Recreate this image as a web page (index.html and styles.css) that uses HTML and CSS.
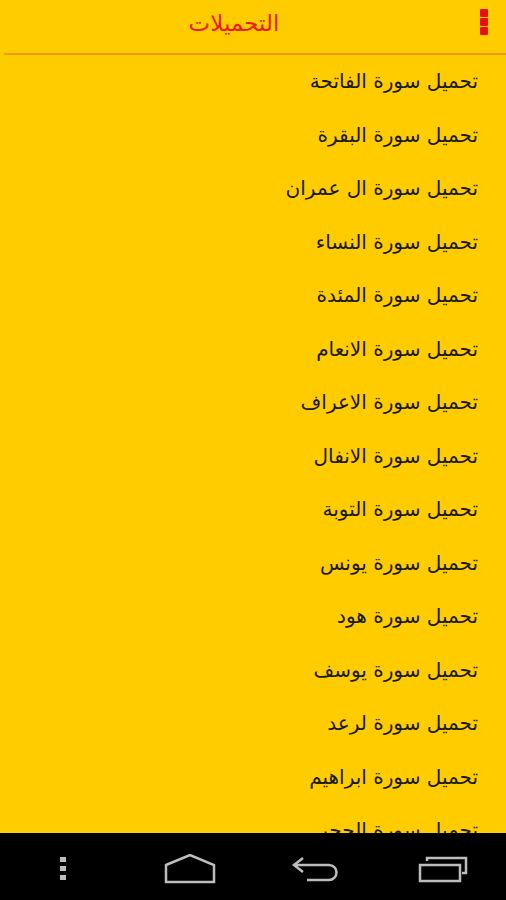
FILE: index.html
```html
<!DOCTYPE html>
<html lang="ar" dir="rtl">
<head>
  <meta charset="UTF-8" />
  <meta name="viewport" content="width=device-width, initial-scale=1" />
  <title>التحميلات</title>
  <link rel="stylesheet" href="styles.css">
</head>
<body>
  <div class="screen">
    <div class="action-bar">
      <div class="overflow-btn">
        <span></span><span></span><span></span>
      </div>
      <div class="title">التحميلات</div>
    </div>

    <ul class="sura-list">
      <li>تحميل سورة الفاتحة</li>
      <li>تحميل سورة البقرة</li>
      <li>تحميل سورة ال عمران</li>
      <li>تحميل سورة النساء</li>
      <li>تحميل سورة المئدة</li>
      <li>تحميل سورة الانعام</li>
      <li>تحميل سورة الاعراف</li>
      <li>تحميل سورة الانفال</li>
      <li>تحميل سورة التوبة</li>
      <li>تحميل سورة يونس</li>
      <li>تحميل سورة هود</li>
      <li>تحميل سورة يوسف</li>
      <li>تحميل سورة لرعد</li>
      <li>تحميل سورة ابراهيم</li>
      <li>تحميل سورة الحجر</li>
    </ul>

    <div class="nav-bar" dir="ltr">
      <div class="nav-btn">
        <svg width="10" height="26" viewBox="0 0 10 26">
          <rect x="2" y="1" width="6" height="5" fill="#bdbdbd"/>
          <rect x="2" y="10" width="6" height="5" fill="#bdbdbd"/>
          <rect x="2" y="19" width="6" height="5" fill="#bdbdbd"/>
        </svg>
      </div>
      <div class="nav-btn">
        <svg width="54" height="30" viewBox="0 0 54 30">
          <path d="M3 11 L27 1 L51 11 L51 28 L3 28 Z" fill="none" stroke="#bdbdbd" stroke-width="2.5"/>
        </svg>
      </div>
      <div class="nav-btn">
        <svg width="50" height="26" viewBox="0 0 50 26">
          <path d="M12 2 L3 9 L12 16" fill="none" stroke="#bdbdbd" stroke-width="2.5"/>
          <path d="M3 9 L38 9 A7.5 7.5 0 0 1 38 24 L16 24" fill="none" stroke="#bdbdbd" stroke-width="2.5"/>
        </svg>
      </div>
      <div class="nav-btn">
        <svg width="52" height="28" viewBox="0 0 52 28">
          <path d="M10 6 L10 3 L49 3 L49 18 L45 18" fill="none" stroke="#bdbdbd" stroke-width="2.5"/>
          <rect x="3" y="10" width="40" height="16" fill="none" stroke="#bdbdbd" stroke-width="2.5"/>
        </svg>
      </div>
    </div>
  </div>
</body>
</html>
```

FILE: styles.css
```css
body {
  margin: 0;
  font-family: "DejaVu Sans", sans-serif;
  background-color: #ffcc00;
}

.screen {
  width: 506px;
  height: 900px;
  display: flex;
  flex-direction: column;
  overflow: hidden;
  background-color: #ffcc00;
}

.action-bar {
  height: 53px;
  margin-left: 4px;
  border-bottom: 2px solid #ee9a00;
  display: flex;
  align-items: center;
  position: relative;
  flex-shrink: 0;
}

.title {
  flex: 1;
  text-align: center;
  color: #ea1d14;
  font-size: 23px;
  padding-right: 16px;
  margin-top: -8px;
}

.overflow-btn {
  width: 8px;
  display: flex;
  flex-direction: column;
  gap: 1px;
  margin-right: 18px;
  margin-top: -10px;
}

.overflow-btn span {
  height: 8px;
  background-color: #e80f0f;
  border-radius: 1px;
}

.sura-list {
  list-style: none;
  margin: 0;
  padding: 0;
  flex: 1;
  overflow: hidden;
}

.sura-list li {
  height: 53.5px;
  line-height: 53.5px;
  padding-right: 28px;
  font-size: 20px;
  color: #1a1a1a;
  white-space: nowrap;
}

.nav-bar {
  height: 67px;
  box-sizing: border-box;
  padding-top: 4px;
  background-color: #000;
  display: flex;
  align-items: center;
  justify-content: space-around;
  flex-shrink: 0;
}

.nav-btn {
  width: 126px;
  display: flex;
  justify-content: center;
  align-items: center;
}
```
